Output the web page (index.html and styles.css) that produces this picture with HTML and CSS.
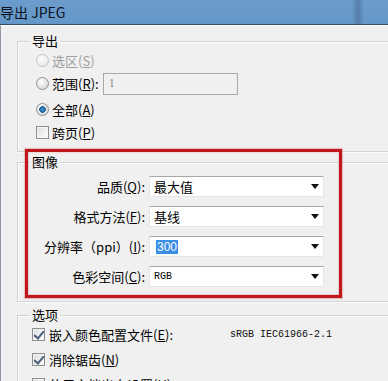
FILE: index.html
```html
<!DOCTYPE html>
<html lang="zh">
<head>
<meta charset="utf-8">
<link rel="stylesheet" href="styles.css">
</head>
<body>
<div class="titlebar"><span class="title">导出 JPEG</span><span class="glare"></span></div>
<div class="dialog">
  <fieldset class="group group-export">
    <legend>导出</legend>
    <div class="content export-rows">
      <div class="row row-a disabled"><span class="radio"></span><span>选区(<u>S</u>)</span></div>
      <div class="row row-b"><span class="radio"></span><span>范围(<u>R</u>):</span><span class="textbox">1</span></div>
      <div class="row row-c"><span class="radio on"></span><span>全部(<u>A</u>)</span></div>
      <div class="row row-d"><span class="check"></span><span>跨页(<u>P</u>)</span></div>
    </div>
  </fieldset>
  <div class="marked">
    <fieldset class="group group-image">
      <legend>图像</legend>
      <div class="content image-rows">
        <div class="field"><span class="label">品质(<u>Q</u>):</span><span class="select"><span class="val">最大值</span><span class="arrow"></span></span></div>
        <div class="field"><span class="label">格式方法(<u>F</u>):</span><span class="select"><span class="val">基线</span><span class="arrow"></span></span></div>
        <div class="field"><span class="label">分辨率（ppi）(<u>I</u>):</span><span class="select"><span class="val"><span class="sel">300</span></span><span class="arrow"></span></span></div>
        <div class="field"><span class="label">色彩空间(<u>C</u>):</span><span class="select"><span class="val mono">RGB</span><span class="arrow"></span></span></div>
      </div>
    </fieldset>
    <div class="redbox"></div>
  </div>
  <fieldset class="group group-opts">
    <legend>选项</legend>
    <div class="content opt-rows">
      <div class="row opt"><span class="check on"></span><span>嵌入颜色配置文件(<u>E</u>):</span><span class="profile">sRGB IEC61966-2.1</span></div>
      <div class="row opt"><span class="check on"></span><span>消除锯齿(<u>N</u>)</span></div>
      <div class="row opt"><span class="check"></span><span>使用文档出血设置(<u>U</u>)</span></div>
    </div>
  </fieldset>
</div>
</body>
</html>
```
FILE: styles.css
```css
* { box-sizing: border-box; }
html, body { margin: 0; padding: 0; }
body {
  width: 388px;
  height: 381px;
  overflow: hidden;
  background: #f0f0f0;
  font-family: "Noto Sans CJK SC", "Noto Sans", sans-serif;
  font-size: 13px;
  color: #000;
}
u { text-decoration: underline; text-underline-offset: 1px; }

.titlebar {
  height: 25px;
  background: linear-gradient(#6c9ccb, #6497c8);
  border-bottom: 1px solid #3a4b60;
  display: flex;
  align-items: center;
  position: relative;
}
.title {
  font-size: 14px;
  line-height: 16px;
  color: #0b1220;
}
.glare {
  position: absolute;
  left: 352px;
  top: 0;
  width: 12px;
  height: 24px;
  background: linear-gradient(90deg, rgba(80,110,150,0), rgba(70,100,140,0.55), rgba(80,110,150,0));
}

.dialog {
  border-left: 1px solid #8d97a3;
  border-top: 1px solid #fbfbfb;
  padding: 7px 0 0 16px;
  height: 356px;
}

.group {
  margin: 0;
  width: 420px;
  min-width: 0;
  padding: 0;
  border: 1px solid #d3d3d3;
  box-shadow: inset 1px 1px 0 #fbfbfb, 1px 1px 0 #fbfbfb;
}
.group legend {
  margin-left: 12px;
  padding: 0 2px;
  line-height: 16px;
  height: 16px;
  font-size: 13px;
  background: #f0f0f0;
}

/* export group */
.export-rows { padding: 0 0 8px 18px; }
.row {
  display: flex;
  align-items: center;
  height: 22px;
  gap: 3px;
}
.row-b { margin-top: 1px; height: 23px; }
.row-c { margin-top: 3px; }
.row-d { margin-top: 1px; }
.disabled { color: #a0a0a0; }

.radio {
  width: 13px;
  height: 13px;
  border-radius: 50%;
  border: 1px solid #8e8f8f;
  background: radial-gradient(circle at 40% 35%, #ffffff, #dcdcdc 70%, #cfcfcf);
  flex: none;
}
.disabled .radio { border-color: #c4c4c4; background: radial-gradient(circle at 40% 35%, #fafafa, #e6e6e6); }
.radio.on {
  background:
    radial-gradient(circle, #4a9ad6 0, #1c5a94 3px, transparent 3.6px),
    radial-gradient(circle at 40% 35%, #ffffff, #dcdcdc 70%, #cfcfcf);
}
.check {
  width: 13px;
  height: 13px;
  border: 1px solid #8e8f8f;
  background: linear-gradient(135deg, #dcdcdc, #ffffff);
  box-shadow: inset 0 0 0 1px #f4f4f4;
  flex: none;
  position: relative;
}
.check.on::after {
  content: "";
  position: absolute;
  left: 3px;
  top: 0;
  width: 4px;
  height: 8px;
  border-right: 2px solid #4a5f80;
  border-bottom: 2px solid #4a5f80;
  transform: rotate(40deg);
}

.textbox {
  margin-left: 1px;
  width: 135px;
  height: 22px;
  border: 1px solid #a9a9a9;
  background: #f0f0f0;
  color: #8a8a8a;
  font-family: "Liberation Serif", serif;
  font-size: 12px;
  line-height: 18px;
  padding-left: 5px;
}

/* image group with annotation */
.marked { position: relative; margin-top: 2px; }
.image-rows { padding: 6px 0 14px 0; }
.field {
  display: flex;
  align-items: center;
  height: 21px;
  margin-bottom: 9px;
}
.field:last-child { margin-bottom: 0; }
.label {
  width: 131px;
  text-align: right;
  padding-right: 4px;
  flex: none;
}
.select {
  width: 175px;
  height: 21px;
  background: #fff;
  border: 1px solid #e6e6e6;
  border-top: 1px solid #a8a8a8;
  display: flex;
  align-items: center;
  justify-content: space-between;
  padding: 0 3px 0 4px;
}
.val { line-height: 16px; }
.sel { background: #3a8ee6; color: #fff; font-family: "Liberation Sans", sans-serif; font-size: 12px; padding: 0 1px; margin-left: 2px; }
.mono { font-family: "Liberation Mono", monospace; font-size: 10px; }
.arrow {
  width: 0;
  height: 0;
  border-left: 4px solid transparent;
  border-right: 4px solid transparent;
  border-top: 5px solid #111;
  margin-right: 1px;
}
.redbox {
  position: absolute;
  left: 8px;
  top: -5px;
  width: 317px;
  height: 149px;
  border: 3px solid #c0171c;
  box-shadow: 0 0 1px 1px rgba(220,120,120,0.4), inset 0 0 1px 1px rgba(220,120,120,0.3);
  pointer-events: none;
}

/* options group */
.group-opts { margin-top: 5px; }
.opt-rows { padding: 0 0 0 14px; }
.opt { gap: 4px; margin-bottom: 3px; }
.profile {
  margin-left: 53px;
  font-family: "Liberation Mono", monospace;
  font-size: 10px;
  color: #111;
}
```
